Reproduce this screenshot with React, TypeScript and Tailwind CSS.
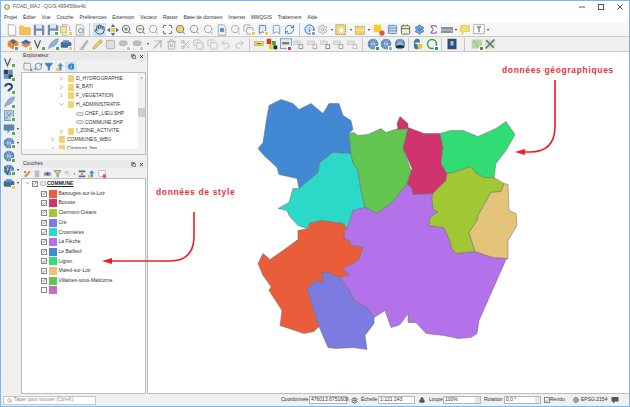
import {
  Bookmark,
  Calendar,
  Copy,
  Filter,
  Globe,
  Hand,
  Info,
  Lock,
  Maximize,
  Pencil,
  Redo2,
  RefreshCw,
  Scissors,
  Search,
  Settings,
  Sigma,
  Square,
  Table,
  Trash2,
  Undo2,
  X,
  ZoomIn,
  ZoomOut,
} from "lucide-react";

const FONT = "font-['Liberation_Sans',Arial,sans-serif]";

const MENU = ["Projet", "Éditer", "Vue", "Couche", "Préférences", "Extension", "Vecteur", "Raster", "Base de données", "Internet", "MMQGIS", "Traitement", "Aide"];

const LAYERS = [
  ["Bazouges-sur-le-Loir", "#e95d3b"],
  ["Bousse", "#cf356c"],
  ["Clermont-Créans", "#a2c734"],
  ["Cré", "#7c7be0"],
  ["Crosmières", "#2bd9c9"],
  ["La Flèche", "#b472ea"],
  ["Le Bailleul", "#4289d4"],
  ["Ligron", "#31dc75"],
  ["Mareil-sur-Loir", "#e3c478"],
  ["Villaines-sous-Malicorne", "#61c54f"],
];

const REGIONS = [
  ["#4289d4", "268,105 280,99 292,103 298,109 310,103 322,113 328,103 338,103 342,115 350,120 352,129 348,133 350,153 332,152 319,162 317,172 310,178 298,188 296,178 278,174 276,167 263,155 257,148 262,142 265,122"],
  ["#2bd9c9", "332,152 350,153 352,162 357,170 360,190 364,207 352,210 350,217 346,228 342,223 320,220 308,223 306,228 297,225 288,215 286,210 277,208 288,202 292,188 298,188 310,178 317,172 319,162"],
  ["#61c54f", "348,133 353,132 357,135 367,134 380,128 385,132 397,128 407,128 402,148 410,170 405,185 390,203 376,213 364,207 360,190 357,170 352,162 350,153"],
  ["#b472ea", "352,210 364,207 376,213 390,203 405,185 406,183 411,188 412,194 432,193 431,198 432,209 437,211 429,217 428,225 443,227 448,238 451,248 455,253 474,251 492,257 507,258 505,259 478,320 476,333 470,337 457,338 443,335 425,333 415,322 407,322 407,313 400,323 397,325 390,327 384,310 373,317 366,307 353,300 347,288 338,277 348,274 342,268 357,260 362,247 350,245 348,240 343,238 343,230 346,228 350,217"],
  ["#cf356c", "399,116 407,123 407,127 423,133 439,133 442,147 440,163 446,173 445,180 432,193 412,194 411,188 406,183 411,168 402,148 407,128 397,129 396,123"],
  ["#31dc75", "439,133 450,130 462,130 477,136 495,128 505,121 514,134 505,150 495,163 493,177 483,177 475,173 470,166 452,172 446,173 440,163 442,147"],
  ["#a2c734", "446,173 452,172 470,166 475,173 483,177 493,177 503,183 500,191 490,192 477,215 476,220 468,232 474,251 455,253 451,248 448,238 443,227 428,225 429,217 437,211 432,209 431,198 432,193 445,180"],
  ["#e3c478", "503,183 507,184 508,210 515,213 516,225 507,240 507,258 492,257 474,251 468,232 476,220 477,215 490,192 500,191"],
  ["#e95d3b", "297,230 307,228 308,223 320,220 342,223 346,228 343,230 343,238 348,240 350,245 362,247 357,260 342,268 348,274 338,277 327,272 321,272 323,282 315,280 306,288 312,307 318,326 313,331 303,333 288,328 279,325 281,310 268,290 270,286 262,275 257,263 262,253 269,259 282,250 297,239"],
  ["#7c7be0", "321,272 327,272 338,277 347,288 353,300 366,307 373,317 373,323 364,335 366,349 352,347 335,348 327,347 318,326 312,307 306,288 315,280 323,282"],
];

type IconProps = { size?: number; className?: string; color?: string; fill?: string; strokeWidth?: number };

// small corner mark used on most QGIS icons
function Badge({ c = "#4caf50" }: { c?: string }) {
  return <span className="absolute right-0 bottom-0 w-[5px] h-[5px] border border-white" style={{ background: c }} />;
}

function Cell({ children, b, active, w = "w-[13.6px]" }: { children: React.ReactNode; b?: string; active?: boolean; w?: string }) {
  return (
    <div className={`relative h-[13px] shrink-0 flex items-center justify-center ${w} ${active ? "bg-[#cde4f7]" : ""}`}>
      {children}
      {b && <Badge c={b} />}
    </div>
  );
}

function Lc({ I, c, f, b, active, s = 11 }: { I: React.ComponentType<IconProps>; c: string; f?: string; b?: string; active?: boolean; s?: number }) {
  return (
    <Cell b={b} active={active}>
      <I size={s} color={c} fill={f ?? "none"} strokeWidth={2} />
    </Cell>
  );
}

function Sv({ children, b, w }: { children: React.ReactNode; b?: string; w?: string }) {
  return (
    <Cell b={b} w={w}>
      <svg viewBox="0 0 16 16" className="w-[12px] h-[12px]">
        {children}
      </svg>
    </Cell>
  );
}

const Sep = ({ w = "w-[6px]" }: { w?: string }) => (
  <div className={`${w} h-[13px] shrink-0 flex justify-center`}>
    <div className="w-px h-full bg-[#c8c8c8]" />
  </div>
);

const Drop = ({ w = "w-[5px]" }: { w?: string }) => (
  <div className={`${w} shrink-0 flex justify-center`}>
    <div className="w-0 h-0 border-x-[1.5px] border-x-transparent border-t-2 border-t-[#333]" />
  </div>
);

const Doc = ({ f = "#fff", c = "#9a9a9a" }: { f?: string; c?: string }) => (
  <path d="M3 1h7l3 3v11H3z" fill={f} stroke={c} strokeWidth="1" />
);
const Floppy = ({ c = "#6f8db0" }: { c?: string }) => (
  <>
    <path d="M1 1h12l2 2v12H1z" fill={c} />
    <rect x="4" y="1" width="8" height="5" fill="#dfe7ef" />
    <rect x="4" y="9" width="8" height="6" fill="#f2f2f2" />
  </>
);
const Folder = () => <path d="M1 3h5l2 2h7v9H1z" fill="#f3c453" stroke="#dca52c" strokeWidth="0.8" />;
const Label = ({ c = "#f1d84f", e = "#9a8a2a" }: { c?: string; e?: string }) => (
  <>
    <rect x="2" y="5" width="12" height="5" fill={c} stroke={e} strokeWidth="0.6" />
    <path d="M5 7.5h6" stroke="#555" strokeWidth="1.2" />
  </>
);
const Grey = ({ x = "#aaa" }: { x?: string }) => (
  <>
    <rect x="1" y="4" width="9" height="5" fill="#dedede" stroke="#b5b5b5" strokeWidth="0.6" />
    <rect x="8" y="9" width="5" height="5" fill="#fff" stroke={x} strokeWidth="1" />
  </>
);
const Globeish = () => (
  <>
    <circle cx="8" cy="8" r="7" fill="#4f81b8" />
    <path d="M2 8h12M8 1v14M4 3c3 3 3 7 0 10M12 3c-3 3-3 7 0 10" stroke="#cfe0f0" strokeWidth="0.9" fill="none" />
  </>
);
const VShape = () => <polyline points="2,3 6,13 10,3" fill="none" stroke="#4a5a68" strokeWidth="1.6" />;

function ToolbarOne() {
  return (
    <div className="flex items-center h-[14px] pl-1 bg-[#f6f6f6] border-b border-[#c9c9c9]">
      <Sv><Doc /></Sv>
      <Sv><Folder /></Sv>
      <Sv><Floppy /></Sv>
      <Sv b="#4caf50"><Floppy /></Sv>
      <Sv b="#f3c453"><Doc /><rect x="1" y="3" width="8" height="9" fill="#f7e3a1" stroke="#b89a3c" strokeWidth="0.8" /></Sv>
      <Sv><Doc f="#f4f4f4" /><circle cx="9" cy="9" r="3" fill="none" stroke="#6a7f95" strokeWidth="1.2" /></Sv>
      <Sep />
      <Lc I={Hand} c="#3c4650" active />
      <Sv>
        <path d="M8 0l3 4H5zM8 16l-3-4h6zM0 8l4-3v6zM16 8l-4 3V5z" fill="#3f6fa8" />
        <rect x="5" y="5" width="6" height="6" fill="#eec94a" />
      </Sv>
      <Lc I={ZoomIn} c="#3e6d9c" f="#fff3c4" />
      <Lc I={ZoomOut} c="#3e6d9c" f="#fff3c4" />
      <Lc I={Search} c="#a2a2a2" />
      <Lc I={Maximize} c="#2f5f92" f="#f3d26a" />
      <Lc I={Search} c="#64748b" f="#f3d26a" />
      <Lc I={Search} c="#85909b" />
      <Lc I={Search} c="#a2a2a2" />
      <Sv><Doc f="#eaf1f8" /><circle cx="8" cy="8" r="3" fill="#5b8ec4" /></Sv>
      <Lc I={Search} c="#a8a8a8" />
      <Lc I={Copy} c="#a0a0a0" b="#f3c453" />
      <Lc I={Bookmark} c="#567ba3" f="#dfe9f2" b="#f3c453" />
      <Lc I={Bookmark} c="#8a9aab" f="#eef1f4" />
      <Lc I={RefreshCw} c="#2f77bb" />
      <Sep />
      <Lc I={Info} c="#2f6eaa" f="#cfe1f2" b="#999" />
      <Lc I={Settings} c="#a6a6a6" />
      <Drop />
      <Sv><rect x="1" y="1" width="13" height="13" fill="#f4dc72" stroke="#70808f" strokeWidth="1" strokeDasharray="2 1" /><rect x="6" y="6" width="5" height="5" fill="#fff" /></Sv>
      <Drop />
      <Sv><rect x="2" y="3" width="12" height="11" fill="#f0d35c" stroke="#a2a2a2" strokeWidth="0.8" /><path d="M2 8h12" stroke="#fff" /></Sv>
      <Drop />
      <Sv><rect x="1" y="1" width="10" height="10" fill="#f3cf36" /><circle cx="12" cy="12" r="3.5" fill="#e0524e" /></Sv>
      <Lc I={Table} c="#5b88b4" f="#c7dcef" />
      <Lc I={Calendar} c="#7a5a4a" f="#e8f0e0" />
      <Lc I={Settings} c="#3f78b5" f="#7aa9d8" />
      <Lc I={Sigma} c="#7b2f9b" />
      <Sv><rect x="0" y="4" width="16" height="8" fill="#8b949c" /><path d="M0 8h16" stroke="#ddd" /></Sv>
      <Drop />
      <Sv><path d="M2 2h12v8H7l-3 4v-4H2z" fill="#f6dc6a" stroke="#c9ae3a" strokeWidth="0.6" /></Sv>
      <Sv><rect x="1" y="1" width="14" height="12" fill="#fff" stroke="#999" /><path d="M5 4h6M8 4v7" stroke="#555" strokeWidth="1.4" /></Sv>
      <Drop />
    </div>
  );
}

function ToolbarTwo() {
  const C = "w-[13.4px]";
  return (
    <div className="flex items-center h-[15px] pl-[5px] bg-[#f0f0f0] border-b border-[#c9c9c9]">
      <Sv w={C} b="#4caf50"><path d="M1 5l7-4 7 4v6l-7 4-7-4z" fill="#e8893a" /><path d="M4 4l4-2 5 3-4 3z" fill="#3d6ea8" /></Sv>
      <Sv w={C} b="#f3c453"><path d="M1 6l7-4 7 4-7 4z" fill="#3d6ea8" /><path d="M1 9l7 4 7-4-7-2z" fill="#e8893a" /></Sv>
      <Sv w={C} b="#4caf50"><VShape /></Sv>
      <Sv w={C} b="#4caf50"><path d="M2 14C4 6 9 2 15 1c0 6-5 11-10 11z" fill="#8fb3d6" stroke="#47709a" strokeWidth="0.6" /></Sv>
      <Sv w={C} b="#f3c453"><rect x="1" y="5" width="14" height="8" rx="2" fill="#3e6d9c" /><rect x="4" y="3" width="8" height="4" fill="#5b8ec4" /></Sv>
      <Sep w="w-[4px]" />
      <Sv w={C}><path d="M3 14L12 2l2 2-6 10z" fill="#b4b4b4" /><path d="M2 15h6" stroke="#8a8a8a" /></Sv>
      <Lc I={Pencil} c="#c9a33b" f="#efd070" />
      <Lc I={Square} c="#b0b0b0" f="#dedede" />
      <Sv w={C} b="#c0c0c0"><ellipse cx="7" cy="7" rx="6" ry="4" fill="#bcbcbc" /></Sv>
      <Sv w={C} b="#c0c0c0"><ellipse cx="7" cy="7" rx="6" ry="4" fill="#bcbcbc" /></Sv>
      <Drop w="w-[7px]" />
      <Sv w={C}><path d="M2 14L13 3M3 4h9v9" fill="none" stroke="#b4b4b4" strokeWidth="1.5" /></Sv>
      <Lc I={Trash2} c="#aeaeae" />
      <Lc I={Scissors} c="#b0b0b0" />
      <Lc I={Copy} c="#b6b6b6" />
      <Lc I={Copy} c="#c2c2c2" />
      <Lc I={Undo2} c="#bcbcbc" />
      <Lc I={Redo2} c="#bcbcbc" />
      <Sep w="w-[6px]" />
      <Sv w={C}><Label /></Sv>
      <Sv w={C}>
        <rect x="1" y="1" width="6" height="7" fill="#d53a2e" />
        <rect x="8" y="4" width="5" height="6" fill="#3aa14a" />
        <rect x="4" y="8" width="5" height="7" fill="#f2c534" />
        <rect x="10" y="10" width="5" height="5" fill="#222" />
      </Sv>
      <Sv w={C} b="#d53a2e"><rect x="0.5" y="1" width="15" height="13" fill="#dfeaf5" stroke="#5a8dc2" /><path d="M3 7h9" stroke="#8f7a1e" strokeWidth="3" /></Sv>
      <Sv w={C}><Grey x="#777" /></Sv>
      <Sv w={C}><Grey x="#999" /></Sv>
      <Sv w={C}><Grey x="#666" /></Sv>
      <Sv w={C}><Grey x="#888" /></Sv>
      <Sv w={C}><Grey /></Sv>
      <Sep w="w-[7px]" />
      <Sv w={C} b="#2e9e4f"><Globeish /></Sv>
      <Sv w={C} b="#7fbf7f"><Globeish /></Sv>
      <Sv w={C}><Globeish /><path d="M2 13c2-5 10-5 12 0z" fill="#222" /></Sv>
      <Sep w="w-[4px]" />
      <Sv w={C}><path d="M8 1c4 0 4 3 4 5H6v2h8v4c0 2-3 3-6 3s-4-2-4-3V6c0-3 2-5 4-5z" fill="#3f76ae" /><path d="M8 8h7v5c0 1-3 2-5 2z" fill="#f2c534" /></Sv>
      <div className="w-[1.5px] shrink-0" />
      <Sv w={C} b="#3f78b5"><circle cx="8" cy="8" r="6" fill="none" stroke="#3aa14a" strokeWidth="2" /></Sv>
      <Sep w="w-[6px]" />
      <Sv w={C}><rect x="2" y="1" width="12" height="14" fill="#2f4f74" /><rect x="6" y="4" width="4" height="6" fill="#9fc3e4" /></Sv>
      <Sep w="w-[12px]" />
      <Sv w={C} b="#5a8a3a"><rect x="1" y="2" width="14" height="12" fill="#b6d8a8" /><path d="M3 4l4 3 2 5" stroke="#7faa6c" fill="none" /></Sv>
      <Sv w={C}><rect x="1" y="2" width="14" height="12" fill="#eadca4" /><path d="M2 14L14 2M3 3l10 10" stroke="#3f76ae" strokeWidth="2" /></Sv>
    </div>
  );
}

const SIDE = [
  <VShape key="v" />,
  <g key="r"><rect x="1" y="1" width="6" height="6" fill="#26456c" /><rect x="7" y="7" width="6" height="6" fill="#26456c" /><rect x="7" y="1" width="6" height="6" fill="#6c8fb4" /><rect x="1" y="7" width="6" height="6" fill="#6c8fb4" /></g>,
  <path key="q" d="M3 5c0-5 9-5 9 0 0 3-4 3-5 6" fill="none" stroke="#26456c" strokeWidth="2.6" />,
  <path key="f" d="M2 15C4 6 9 2 15 1c0 6-5 11-10 11z" fill="#8fb3d6" stroke="#47709a" strokeWidth="0.6" />,
  <g key="m"><rect x="2" y="1" width="12" height="13" fill="#b9cfe2" stroke="#5e86ab" /><path d="M5 3l3 5 3-5M5 12V8" stroke="#4f7396" fill="none" /></g>,
  <path key="b" d="M1 2h14v8h-6l-3 4v-4H1z" fill="#5b86b0" />,
  <Globeish key="g1" />,
  <Globeish key="g2" />,
  <g key="g3"><Globeish /><VShape /></g>,
  <g key="t"><rect x="1" y="5" width="14" height="8" rx="2" fill="#3e6d9c" /><rect x="4" y="3" width="8" height="4" fill="#5b8ec4" /></g>,
];
const SIDE_DROP = [5, 6, 8, 9];
const SIDE_BADGE = ["#4caf50", "#4caf50", "#4caf50", "#4caf50", "#4caf50", "#4caf50", "#4caf50", "#4caf50", "#4caf50", "#f3c453"];

function SideBar() {
  return (
    <div className="w-[20px] shrink-0 bg-[#f0f0f0] pt-[3px]">
      {SIDE.map((ic, i) => (
        <div key={i} className="relative h-[13.5px] flex items-center">
          <div className="relative w-[15px] h-[13px] flex items-center justify-center">
            <svg viewBox="0 0 16 16" className="w-[12px] h-[12px]">{ic}</svg>
            <Badge c={SIDE_BADGE[i]} />
          </div>
          {SIDE_DROP.includes(i) && <Drop w="w-[4px]" />}
        </div>
      ))}
    </div>
  );
}

function PanelHead({ title }: { title: string }) {
  return (
    <div className="h-[8px] flex items-center justify-between pl-[2px] pr-[2px] text-[5px] text-[#333] bg-[#e9e9e9]">
      <span>{title}</span>
      <div className="flex items-center gap-[3px]">
        <Copy size={5} color="#333" strokeWidth={3} />
        <X size={5} color="#333" strokeWidth={4} />
      </div>
    </div>
  );
}

const Chev = ({ down }: { down?: boolean }) => (
  <svg viewBox="0 0 8 8" className="w-[5px] h-[5px] shrink-0">
    <path d={down ? "M1 2l3 3 3-3" : "M2 1l3 3-3 3"} fill="none" stroke="#8a8a8a" strokeWidth="1.2" />
  </svg>
);

const FolderIc = () => (
  <span className="w-[6px] h-[7px] bg-[#f5d26f] shrink-0 rounded-[1px]" />
);

const TREE: { t: string; l: number; k: "folder" | "file"; down?: boolean }[] = [
  { t: "D_HYDROGRAPHIE", l: 37, k: "folder" },
  { t: "E_BATI", l: 37, k: "folder" },
  { t: "F_VEGETATION", l: 37, k: "folder" },
  { t: "H_ADMINISTRATIF", l: 37, k: "folder", down: true },
  { t: "CHEF_LIEU.SHP", l: 63, k: "file" },
  { t: "COMMUNE.SHP", l: 63, k: "file" },
  { t: "I_ZONE_ACTIVITE", l: 37, k: "folder" },
  { t: "COMMUNES_WBG", l: 28, k: "folder" },
  { t: "Contours Jpg", l: 28, k: "folder" },
];

function Explorer() {
  return (
    <div className="shrink-0">
      <PanelHead title="Explorateur" />
      <div className="h-[12px] flex items-center pl-[1px]">
        <div className="flex items-center scale-[0.8] origin-left gap-0">
          <Lc I={Square} c="#7d8b8f" b="#4caf50" />
          <Lc I={RefreshCw} c="#2f77bb" />
          <Lc I={Filter} c="#3f7fb8" f="#3f7fb8" />
          <Sv><path d="M8 1l5 6h-3v7H6V7H3z" fill="#5b8ec4" /><rect x="1" y="10" width="5" height="5" fill="#f3c453" /></Sv>
          <Lc I={Info} c="#fff" f="#3f7fb8" active />
        </div>
      </div>
      <div className="relative h-[83px] bg-white border border-[#bdbdbd] overflow-hidden pt-[1px]">
        {TREE.map((r) => (
          <div key={r.t} className="h-[8.8px] flex items-center text-[5px] text-[#333] whitespace-nowrap" style={{ paddingLeft: r.l }}>
            {r.k === "folder" ? (
              <>
                <Chev down={r.down} />
                <span className="w-[4px]" />
                <FolderIc />
                <span className="ml-[2px]">{r.t}</span>
              </>
            ) : (
              <>
                <span className="w-[8px] h-[4px] mr-[1px] bg-[#e3e3e3] border border-[#bbb] rounded-[2px] -ml-[9px] shrink-0" />
                <span>{r.t}</span>
              </>
            )}
          </div>
        ))}
        {/* scrollbars */}
        <div className="absolute right-0 top-0 bottom-0 w-[7px] bg-[#f2f2f2] flex flex-col items-center">
          <span className="mt-[3px] text-[4px] leading-none text-[#555]">˄</span>
          <div className="absolute top-[35px] w-full h-[9px] bg-[#cdcdcd]" />
        </div>
        <div className="absolute left-0 right-0 bottom-0 h-[5px] bg-[#f2f2f2]" />
      </div>
    </div>
  );
}

const Check = ({ on }: { on?: boolean }) => (
  <span className="w-[6px] h-[6px] border border-[#888] bg-white shrink-0 flex items-center justify-center">
    {on && (
      <svg viewBox="0 0 8 8" className="w-[5px] h-[5px]">
        <path d="M1 4l2 2 4-5" fill="none" stroke="#444" strokeWidth="1.2" />
      </svg>
    )}
  </span>
);

function LayersPanel() {
  return (
    <div className="flex-1 flex flex-col min-h-0 pt-[5px]">
      <PanelHead title="Couches" />
      <div className="h-[10px] flex items-center pl-[1px]">
        <div className="flex items-center scale-[0.75] origin-left">
          <Sv><path d="M2 12L12 2l2 2L6 14z" fill="#e0884a" /><circle cx="4" cy="5" r="2" fill="#4caf50" /></Sv>
          <Sv><rect x="4" y="2" width="8" height="12" fill="#b9c0c6" /></Sv>
          <Sv><ellipse cx="8" cy="8" rx="7" ry="4" fill="#8fa6ba" /><circle cx="8" cy="8" r="2" fill="#26456c" /></Sv>
          <Lc I={Filter} c="#3f7fb8" f="#f3c453" />
          <Sv><rect x="2" y="3" width="8" height="5" fill="#d0d0d0" /><rect x="6" y="8" width="6" height="5" fill="#e2e2e2" /></Sv>
          <Drop />
          <Sv><path d="M2 2h12v3H2zM2 11h12v3H2z" fill="#3f76ae" /><path d="M6 6h4v4H6z" fill="#e09a3a" /></Sv>
          <Sv><path d="M8 1l5 6h-3v7H6V7H3z" fill="#5b8ec4" /><rect x="1" y="10" width="5" height="5" fill="#f3c453" /></Sv>
          <Sv><rect x="2" y="2" width="11" height="11" fill="#fff" stroke="#999" /><rect x="9" y="9" width="6" height="6" fill="#e0524e" /></Sv>
        </div>
      </div>
      <div className="flex-1 bg-white border border-[#bdbdbd] text-[5px] text-[#333] whitespace-nowrap">
        <div className="h-[9.7px] flex items-center pl-[3px]">
          <Chev down />
          <span className="w-[2px]" />
          <Check on />
          <span className="w-[2px]" />
          <span className="w-[6px] h-[5px] bg-[#e8e8e8] border border-[#c4c4c4] rounded-[1px] shrink-0" />
          <span className="ml-[1px] font-bold underline text-[#222]">COMMUNE</span>
        </div>
        {LAYERS.map(([name, c]) => (
          <div key={name} className="h-[9.7px] flex items-center pl-[18.5px]">
            <Check on />
            <span className="ml-[2px] w-[8px] h-[8px] shrink-0" style={{ background: c }} />
            <span className="ml-[2px]">{name}</span>
          </div>
        ))}
        <div className="h-[9.7px] flex items-center pl-[18.5px]">
          <Check />
          <span className="ml-[2px] w-[8px] h-[8px] bg-[#c76bc6]" />
        </div>
      </div>
    </div>
  );
}

const Field = ({ w, children, spin }: { w: string; children: React.ReactNode; spin?: boolean }) => (
  <div className={`${w} h-[8px] bg-white border border-[#b5b5b5] flex items-center justify-between pl-[1px] shrink-0`}>
    <span>{children}</span>
    {spin && <span className="w-[5px] h-full bg-[#e3e3e3]" />}
  </div>
);

function StatusBar() {
  return (
    <div className="h-[12px] shrink-0 flex items-center bg-[#f0f0f0] text-[5px] text-[#333] whitespace-nowrap pl-[2px]">
      <div className="w-[93px] h-[9px] bg-white border border-[#c4c4c4] flex items-center gap-[2px] pl-[3px] text-[#888] shrink-0">
        <Search size={5} color="#888" strokeWidth={3} />
        Taper pour trouver (Ctrl+K)
      </div>
      <div className="w-[185px] shrink-0" />
      <span className="w-[28px] shrink-0">Coordonnée</span>
      <Field w="w-[38px]">476013,6751609</Field>
      <div className="w-[14px] shrink-0 flex justify-center">
        <Settings size={7} color="#555" strokeWidth={3} />
      </div>
      <span className="w-[17px] shrink-0">Échelle</span>
      <Field w="w-[37px]">1:121 243</Field>
      <div className="w-[14px] shrink-0 flex justify-center">
        <Lock size={6} color="#555" fill="#555" />
      </div>
      <span className="w-[14px] shrink-0">Loupe</span>
      <Field w="w-[38px]" spin>100%</Field>
      <span className="w-[23px] pl-[3px] shrink-0">Rotation</span>
      <Field w="w-[37px]" spin>0,0 °</Field>
      <div className="w-[9px] pl-[3px] shrink-0">
        <Check on />
      </div>
      <span className="w-[21px] shrink-0">Rendu</span>
      <div className="w-[10px] shrink-0 flex justify-center">
        <Globe size={6} color="#777" strokeWidth={3} />
      </div>
      <span className="w-[28px] shrink-0">EPSG:2154</span>
      <div className="w-[12px] shrink-0 flex justify-center">
        <svg viewBox="0 0 16 16" className="w-[8px] h-[8px]">
          <path d="M1 2h14v9H8l-4 4v-4H1z" fill="#555" />
        </svg>
      </div>
    </div>
  );
}

export default function App() {
  return (
    <div className={`relative w-[630px] h-[407px] flex flex-col overflow-hidden bg-[#f0f0f0] border border-[#79b8ec] ${FONT}`}>
      {/* title bar */}
      <div className="h-[11px] shrink-0 bg-white flex items-center pl-[3px] text-[5px] text-[#555]">
        <svg viewBox="0 0 16 16" className="w-[6px] h-[6px] mr-[3px]">
          <circle cx="8" cy="8" r="6" fill="none" stroke="#6aa84f" strokeWidth="3" />
          <path d="M9 9l5 6" stroke="#e0c33a" strokeWidth="3" />
        </svg>
        <span>FOAD_MAJ - QGIS 499459be4b</span>
        <div className="ml-auto flex items-center gap-[13px] pr-[6px]">
          <svg viewBox="0 0 8 8" className="w-[6px] h-[6px]">
            <path d="M0 4h8" stroke="#444" strokeWidth="1.2" />
          </svg>
          <svg viewBox="0 0 8 8" className="w-[6px] h-[6px]">
            <rect x="0.6" y="0.6" width="6.8" height="6.8" fill="none" stroke="#444" strokeWidth="1.2" />
          </svg>
          <svg viewBox="0 0 8 8" className="w-[6px] h-[6px]">
            <path d="M0.5 0.5l7 7M7.5 0.5l-7 7" stroke="#444" strokeWidth="1.2" />
          </svg>
        </div>
      </div>
      {/* menu */}
      <div className="h-[11px] shrink-0 bg-white flex items-center gap-[5.85px] pl-[3px] text-[5px] text-[#333] whitespace-nowrap">
        {MENU.map((m) => (
          <span key={m}>{m}</span>
        ))}
      </div>
      <ToolbarOne />
      <ToolbarTwo />

      <div className="flex-1 flex min-h-0">
        <SideBar />
        <div className="w-[125px] shrink-0 flex flex-col min-h-0">
          <Explorer />
          <LayersPanel />
        </div>
        <div className="flex-1 ml-[1px] bg-white border-l border-b border-[#bdbdbd] min-w-0">
          <svg viewBox="147 52 481 340" className="block w-full h-full">
            {REGIONS.map(([c, pts]) => (
              <polygon key={c} points={pts} fill={c} stroke="#6a6a6a" strokeWidth="0.5" strokeLinejoin="round" />
            ))}
          </svg>
        </div>
      </div>
      <StatusBar />

      {/* annotations over the window */}
      <svg viewBox="0 0 630 407" className="absolute left-[-1px] top-[-1px] w-[630px] h-[407px] pointer-events-none">
        <path d="M555 80V128Q554 152 530 152H520" fill="none" stroke="#ee1c25" strokeWidth="1.6" />
        <path d="M515 152l10-3v6z" fill="#ee1c25" />
        <path d="M194 212V238Q193 261 170 261H108" fill="none" stroke="#ee1c25" strokeWidth="1.6" />
        <path d="M102 261l10-3v6z" fill="#ee1c25" />
      </svg>
      <span className="absolute left-[501px] top-[64px] text-[8.5px] leading-[10px] font-bold tracking-[0.65px] text-[#e8323c] whitespace-nowrap">données géographiques</span>
      <span className="absolute left-[155px] top-[186px] text-[8.5px] leading-[10px] font-bold tracking-[0.65px] text-[#e8323c] whitespace-nowrap">données de style</span>
    </div>
  );
}
